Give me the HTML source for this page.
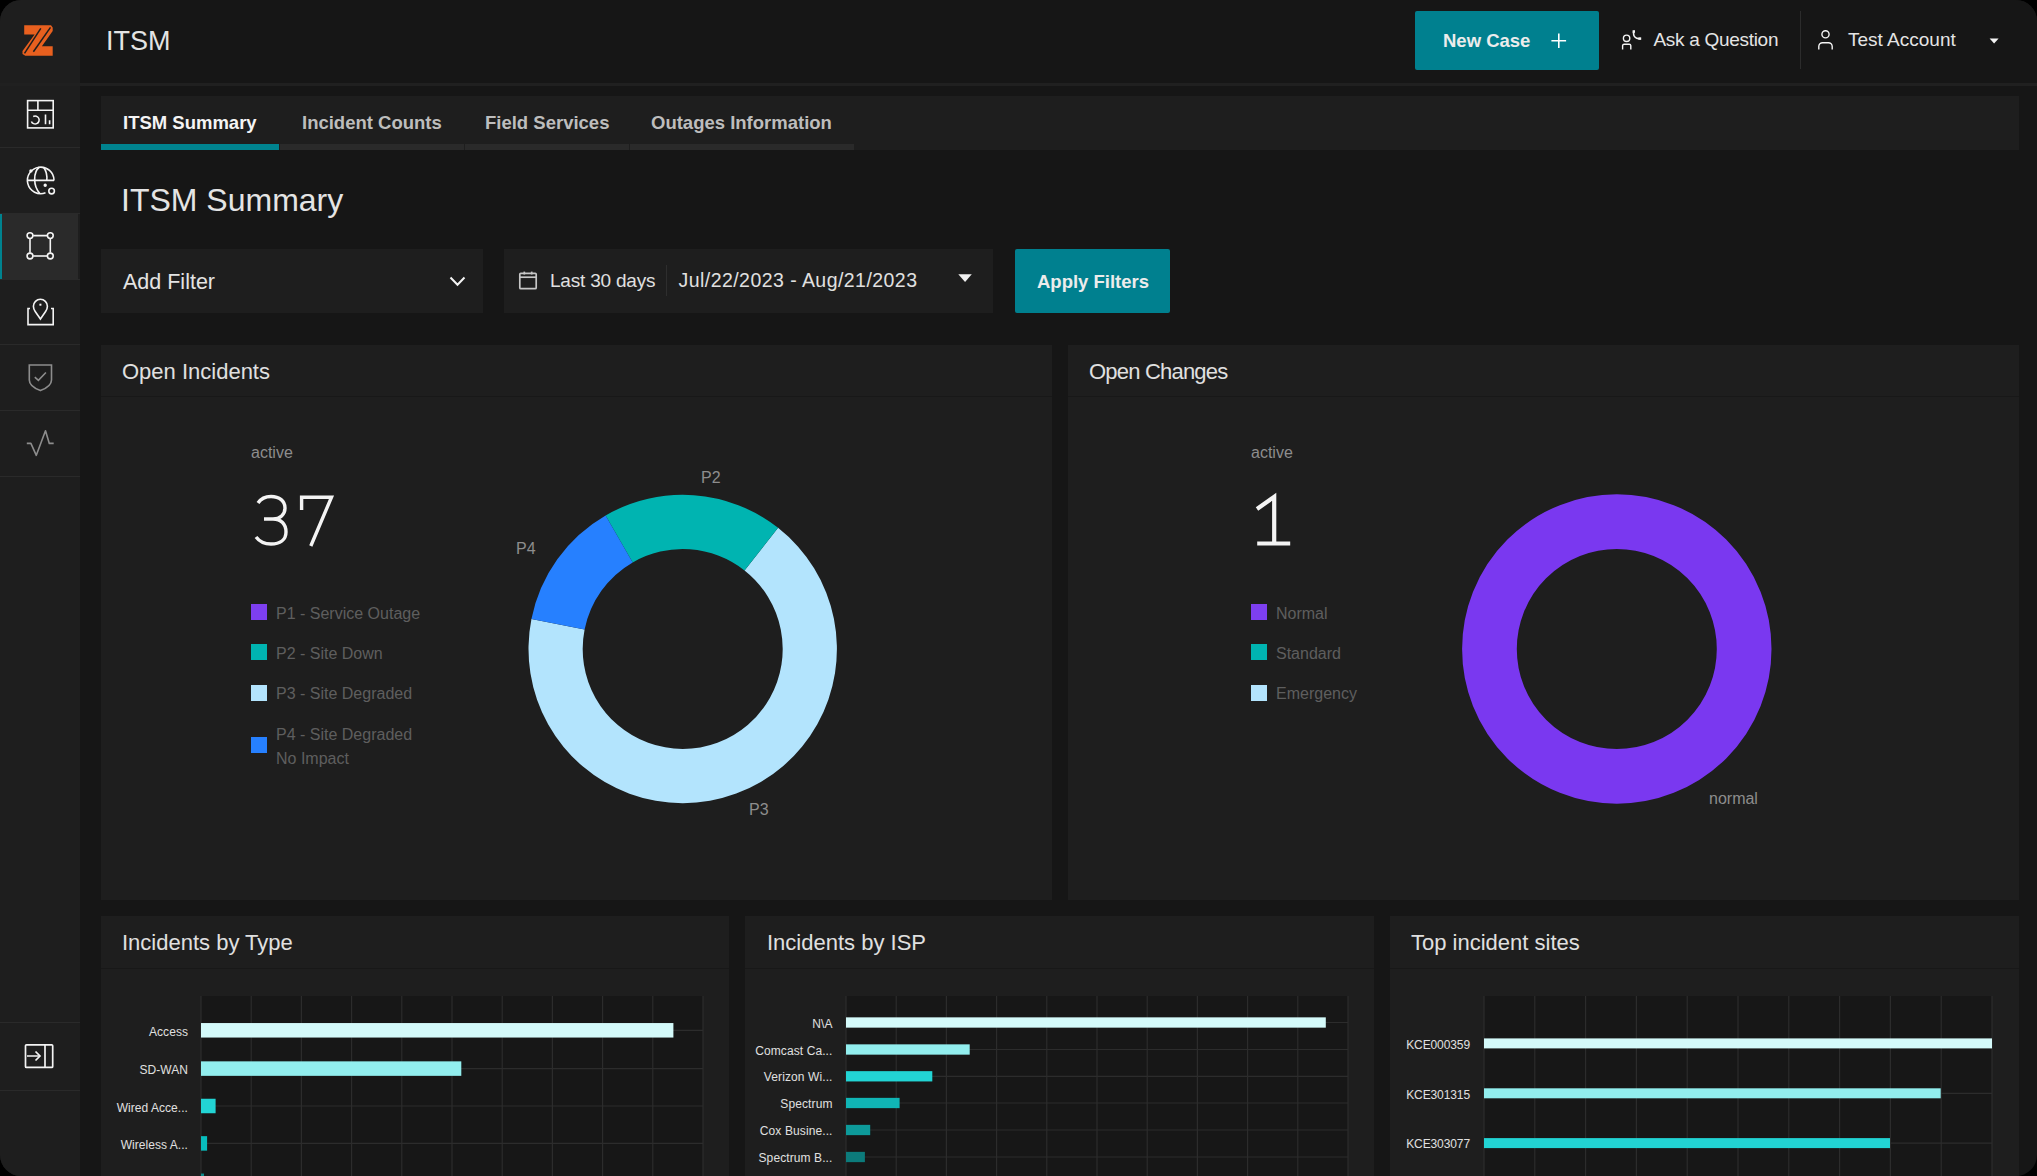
<!DOCTYPE html>
<html><head><meta charset="utf-8">
<style>
html,body{margin:0;padding:0;background:#000;width:2037px;height:1176px;overflow:hidden}
*{box-sizing:border-box}
#app{position:absolute;left:0;top:0;width:2037px;height:1176px;border-radius:21px;overflow:hidden;background:#161616;font-family:"Liberation Sans",sans-serif;color:#f4f4f4}
.a{position:absolute}
.t{position:absolute;white-space:nowrap;line-height:1}
#side{left:0;top:0;width:80px;height:1176px;background:#1e1e1e}
.hl{position:absolute;left:0;width:80px;height:1px;background:#2a2a2a}
#hdr{left:80px;top:0;width:1957px;height:83px;background:#161616}
#hdrline{left:0;top:83px;width:2037px;height:3px;background:#202020}
.card{position:absolute;background:#1e1e1e}
.card .sep{position:absolute;left:0;right:0;height:1px;background:#181818}
.ctitle{font-size:22px;color:#e0e0e0}
.leg{font-size:16px;color:#5e5e5e}
.dl{font-size:16px;color:#8d8d8d}
.plot{position:absolute;background:#171717}
</style></head>
<body>
<div id="app">
  <!-- sidebar -->
  <div id="side" class="a">
    <div class="hl" style="top:84px"></div>
    <div class="hl" style="top:147px"></div>
    <div class="a" style="left:0;top:213px;width:78px;height:66px;background:#2a2a2a"></div>
    <div class="a" style="left:0;top:213px;width:2px;height:66px;background:#00838f"></div>
    <div class="hl" style="top:213px"></div>
    <div class="hl" style="top:279px"></div>
    <div class="hl" style="top:344px"></div>
    <div class="hl" style="top:410px"></div>
    <div class="hl" style="top:476px"></div>
    <div class="hl" style="top:1022px"></div>
    <div class="hl" style="top:1090px"></div>
    <svg class="a" style="left:0;top:0" width="80" height="1176" viewBox="0 0 80 1176">
      <!-- logo -->
      <g>
        <polygon fill="#e8601f" points="24.2,25.3 51,25.3 52.7,27.5 52.7,31 41.9,46.3 52.7,46.3 52.7,55.7 25.3,55.7 22.5,54 22.5,51 34.6,34.5 24.2,34.5"/>
        <line x1="40.8" y1="28.3" x2="24.5" y2="53.4" stroke="#1e1e1e" stroke-width="1.5"/>
        <line x1="50.5" y1="27.4" x2="33.4" y2="51.7" stroke="#1e1e1e" stroke-width="1.5"/>
      </g>
      <g fill="none" stroke="#f4f4f4" stroke-width="1.6">
        <!-- dashboard -->
        <rect x="27.6" y="100.6" width="25.6" height="27.3"/>
        <line x1="27.6" y1="110.3" x2="53.2" y2="110.3"/>
        <line x1="37.9" y1="100.6" x2="37.9" y2="110.3"/>
        <path d="M33.2,116.5 A4,4 0 1 1 31.4,121.4" stroke-width="1.5"/>
        <line x1="45.5" y1="114.4" x2="45.5" y2="124.3"/>
        <line x1="49.6" y1="120.2" x2="49.6" y2="124.3"/>
        <!-- globe -->
        <path d="M54,180.4 A13.3,13.3 0 1 0 45.5,192.8"/>
        <line x1="27" y1="180.4" x2="54" y2="180.4"/>
        <path d="M39.5,167 C33,172 33,186 39.8,193.5"/>
        <path d="M43.5,167.2 C46.5,171 47.2,176 46.8,180.4"/>
        <circle cx="51.6" cy="191.1" r="2.8"/>
        <circle cx="30.9" cy="170.9" r="0.9" fill="#f4f4f4"/>
        <circle cx="45.2" cy="185.2" r="0.9" fill="#f4f4f4"/>
        <!-- square -->
        <line x1="30" y1="238.8" x2="30" y2="252.8"/>
        <line x1="50.3" y1="238.8" x2="50.3" y2="252.8"/>
        <line x1="33.2" y1="235.6" x2="47.1" y2="235.6"/>
        <line x1="33.2" y1="256" x2="47.1" y2="256"/>
        <circle cx="30" cy="235.6" r="2.9"/>
        <circle cx="50.3" cy="235.6" r="2.9"/>
        <circle cx="30" cy="256" r="2.9"/>
        <circle cx="50.3" cy="256" r="2.9"/>
        <!-- map pin -->
        <path d="M40.4,319 L35.2,311.5 C33.8,309.5 33.4,308 33.4,306.3 A7,7 0 0 1 47.4,306.3 C47.4,308 47,309.5 45.6,311.5 Z"/>
        <path d="M30,308.5 L28,308.5 L28,324.6 L53.2,324.6 L53.2,308.5 L51,308.5"/>
      </g>
      <rect x="39.4" y="303.7" width="2" height="2" fill="#f4f4f4"/>
      <g fill="none" stroke="#8d8d8d" stroke-width="1.6">
        <path d="M29.3,365 L51.5,365 L51.5,380 C51.5,385 46,388.5 40.4,390.6 C34.8,388.5 29.3,385 29.3,380 Z"/>
        <path d="M34.8,377.1 L38.4,380.3 L45.9,372.5"/>
        <path d="M26.8,443.4 L30.9,443.4 L36.3,455.3 L45.5,430.8 L49.3,443.4 L53.7,443.4" stroke-linejoin="round"/>
      </g>
      <g fill="none" stroke="#f4f4f4" stroke-width="1.7">
        <rect x="25.5" y="1044.8" width="27.2" height="22.6" rx="1"/>
        <line x1="45" y1="1044.8" x2="45" y2="1067.4"/>
        <line x1="27" y1="1056" x2="40" y2="1056"/>
        <path d="M35.5,1051.5 L40,1056 L35.5,1060.5"/>
      </g>
    </svg>
  </div>
  <!-- header -->
  <div id="hdr" class="a">
    <div class="t" style="left:26px;top:28px;font-size:27px;color:#e4e4e4">ITSM</div>
  </div>
  <div class="a" style="left:1415px;top:11px;width:184px;height:59px;background:#00808f;border-radius:2px"></div>
  <div class="t" style="left:1443px;top:31.5px;font-size:18.5px;font-weight:bold;color:#ececec">New Case</div>
  <svg class="a" style="left:1549px;top:31px" width="20" height="20" viewBox="0 0 20 20"><path d="M9.8,2.4 V17.1 M2.4,9.8 H17.1" stroke="#fff" stroke-width="1.6"/></svg>
  <svg class="a" style="left:1615px;top:25px" width="30" height="30" viewBox="1615 25 30 30" fill="none" stroke="#f4f4f4" stroke-width="1.4">
    <circle cx="1626.6" cy="38.3" r="3.2"/>
    <path d="M1622.6,49.5 V45.5 A1.5,1.5 0 0 1 1624.1,44.2 H1629.3 A1.5,1.5 0 0 1 1630.8,45.5 V49.5"/>
    <path d="M1633.6,31.5 L1633.6,34 C1633.6,36.5 1636,38.6 1638.5,38.6 L1640.8,38.6" stroke-width="1.6"/>
    <rect x="1632.6" y="30.2" width="2.4" height="2.6" fill="#f4f4f4" stroke="none"/>
    <rect x="1638.4" y="37.4" width="2.8" height="2.4" fill="#f4f4f4" stroke="none"/>
  </svg>
  <div class="t" style="left:1653.5px;top:30px;font-size:19px;letter-spacing:-0.3px;color:#e4e4e4">Ask a Question</div>
  <div class="a" style="left:1800px;top:11px;width:1px;height:58px;background:#2c2c2c"></div>
  <svg class="a" style="left:1812px;top:25px" width="30" height="30" viewBox="1812 25 30 30" fill="none" stroke="#f4f4f4" stroke-width="1.4">
    <circle cx="1825.5" cy="34.3" r="3.6"/>
    <path d="M1818.8,49.5 V46.5 A3.8,3.8 0 0 1 1822.6,42.7 H1828.4 A3.8,3.8 0 0 1 1832.2,46.5 V49.5"/>
  </svg>
  <div class="t" style="left:1848px;top:30px;font-size:19px;color:#e4e4e4">Test Account</div>
  <svg class="a" style="left:1985px;top:34px" width="18" height="14" viewBox="1985 34 18 14"><path d="M1989.6,38.4 H1998.6 L1994.1,43.6 Z" fill="#f4f4f4"/></svg>
  <div id="hdrline" class="a"></div>

  <!-- tabs -->
  <div class="a" style="left:101px;top:96px;width:1918px;height:54px;background:#1e1e1e"></div>
  <div class="a" style="left:101px;top:144px;width:178px;height:5.6px;background:#00838f"></div>
  <div class="a" style="left:280px;top:144px;width:184px;height:5.6px;background:#2a2a2a"></div>
  <div class="a" style="left:465px;top:144px;width:164px;height:5.6px;background:#2a2a2a"></div>
  <div class="a" style="left:630px;top:144px;width:224px;height:5.6px;background:#2a2a2a"></div>
  <div class="t" style="left:123px;top:114px;font-size:18.5px;font-weight:bold;color:#f4f4f4">ITSM Summary</div>
  <div class="t" style="left:302px;top:114px;font-size:18.5px;font-weight:bold;color:#bdbdbd">Incident Counts</div>
  <div class="t" style="left:485px;top:114px;font-size:18.5px;font-weight:bold;color:#bdbdbd">Field Services</div>
  <div class="t" style="left:651px;top:114px;font-size:18.5px;font-weight:bold;color:#bdbdbd">Outages Information</div>
  <div class="t" style="left:121px;top:184px;font-size:32px;color:#e4e4e4">ITSM Summary</div>

  <!-- filters -->
  <div class="a" style="left:101px;top:249px;width:382px;height:64px;background:#1e1e1e"></div>
  <div class="t" style="left:123px;top:272px;font-size:21.5px;color:#e4e4e4">Add Filter</div>
  <svg class="a" style="left:445px;top:270px" width="25" height="22" viewBox="445 270 25 22"><path d="M450.5,277.5 L457.5,284.8 L464.5,277.5" fill="none" stroke="#f4f4f4" stroke-width="2"/></svg>
  <div class="a" style="left:504px;top:249px;width:489px;height:64px;background:#1e1e1e"></div>
  <svg class="a" style="left:515px;top:266px" width="26" height="26" viewBox="515 266 26 26" fill="none" stroke="#c6c6c6" stroke-width="1.7">
    <rect x="519.8" y="273.3" width="16.4" height="15.4" rx="1"/>
    <line x1="519.8" y1="277.2" x2="536.2" y2="277.2"/>
    <line x1="524.3" y1="271.6" x2="524.3" y2="274.5"/>
    <line x1="531.7" y1="271.6" x2="531.7" y2="274.5"/>
  </svg>
  <div class="t" style="left:550px;top:271px;font-size:19px;letter-spacing:-0.2px;color:#e0e0e0">Last 30 days</div>
  <div class="a" style="left:666px;top:265px;width:1px;height:31px;background:#2e2e2e"></div>
  <div class="t" style="left:678.5px;top:271px;font-size:19.5px;letter-spacing:0.45px;color:#e0e0e0">Jul/22/2023 - Aug/21/2023</div>
  <svg class="a" style="left:950px;top:268px" width="30" height="20" viewBox="950 268 30 20"><path d="M958.3,274.2 H971.8 L965.05,282 Z" fill="#f0f0f0"/></svg>
  <div class="a" style="left:1015px;top:249px;width:155px;height:64px;background:#00808f;border-radius:2px"></div>
  <div class="t" style="left:1037px;top:273px;font-size:18.5px;font-weight:bold;color:#ececec">Apply Filters</div>

  <!-- cards row 1 -->
  <div class="card" style="left:101px;top:345px;width:950.5px;height:555px">
    <div class="sep" style="top:51px"></div>
  </div>
  <div class="t ctitle" style="left:122px;top:361px">Open Incidents</div>
  <div class="t" style="left:251px;top:445px;font-size:16px;color:#8d8d8d">active</div>
  <svg class="a" style="left:240px;top:480px" width="110" height="80" viewBox="240 480 110 80" fill="none" stroke="#f4f4f4" stroke-width="3.4">
    <path d="M258,503 C261,498.5 265.5,496.5 271,496.5 C279.5,496.5 285,501 285,508 C285,514.5 280,519 273,519 L264,519 M273,519 C281,519 286,524 286,532 C286,540 280,544 271,544 C264,544 259,541 256,537"/>
    <path d="M301.6,510 L301.6,497.2 L331.5,497.2 L310.8,546" stroke-linejoin="miter"/>
  </svg>
  <div class="a" style="left:251px;top:604px;width:16px;height:16px;background:#7d3ff0"></div>
  <div class="a" style="left:251px;top:644px;width:16px;height:16px;background:#00b4b1"></div>
  <div class="a" style="left:251px;top:685px;width:16px;height:16px;background:#b3e4fd"></div>
  <div class="a" style="left:251px;top:737px;width:16px;height:16px;background:#2680ff"></div>
  <div class="t leg" style="left:276px;top:605.5px">P1 - Service Outage</div>
  <div class="t leg" style="left:276px;top:645.5px">P2 - Site Down</div>
  <div class="t leg" style="left:276px;top:686px">P3 - Site Degraded</div>
  <div class="t leg" style="left:276px;top:723px;line-height:23.7px">P4 - Site Degraded<br>No Impact</div>
  <svg class="a" style="left:500px;top:450px" width="370" height="380" viewBox="500 450 370 380">
    <path d="M778.06,527.82 A154.2,154.2 0 1 1 531.44,619.05 L584.60,629.58 A100,100 0 1 0 744.54,570.41 Z" fill="#b3e4fd"/>
    <path d="M605.60,515.46 A154.2,154.2 0 0 1 778.06,527.82 L744.54,570.41 A100,100 0 0 0 632.70,562.40 Z" fill="#00b4b1"/>
    <path d="M531.44,619.05 A154.2,154.2 0 0 1 605.60,515.46 L632.70,562.40 A100,100 0 0 0 584.60,629.58 Z" fill="#2680ff"/>
  </svg>
  <div class="t dl" style="left:701px;top:470px">P2</div>
  <div class="t dl" style="left:516px;top:541px">P4</div>
  <div class="t dl" style="left:749px;top:802px">P3</div>
  <div class="card" style="left:1068px;top:345px;width:951px;height:555px">
    <div class="sep" style="top:51px"></div>
  </div>
  <div class="t ctitle" style="left:1089px;top:361px;letter-spacing:-0.8px">Open Changes</div>
  <div class="t" style="left:1251px;top:445px;font-size:16px;color:#8d8d8d">active</div>
  <svg class="a" style="left:1245px;top:480px" width="60" height="80" viewBox="1245 480 60 80" fill="none" stroke="#f4f4f4" stroke-width="4.2">
    <path d="M1257,509 L1274.2,496.8 L1274.2,543.5 M1257.2,543.5 L1290.2,543.5"/>
  </svg>
  <div class="a" style="left:1251px;top:604px;width:16px;height:16px;background:#7d3ff0"></div>
  <div class="a" style="left:1251px;top:644px;width:16px;height:16px;background:#00b4b1"></div>
  <div class="a" style="left:1251px;top:685px;width:16px;height:16px;background:#b3e4fd"></div>
  <div class="t leg" style="left:1276px;top:605.5px">Normal</div>
  <div class="t leg" style="left:1276px;top:645.5px">Standard</div>
  <div class="t leg" style="left:1276px;top:686px">Emergency</div>
  <svg class="a" style="left:1440px;top:470px" width="360" height="360" viewBox="1440 470 360 360">
    <circle cx="1616.8" cy="649" r="127.35" fill="none" stroke="#7a38f0" stroke-width="54.7"/>
  </svg>
  <div class="t dl" style="left:1709px;top:790.5px">normal</div>
  <!-- cards row 2 -->
  <div class="card" style="left:101px;top:916px;width:628px;height:300px">
    <div class="sep" style="top:52px"></div>
  </div>
  <div class="t ctitle" style="left:122px;top:932px">Incidents by Type</div>
  <div class="plot" style="left:201px;top:996px;width:502px;height:180px"></div>
  <svg class="a" style="left:199px;top:996px" width="506" height="180" viewBox="199 996 506 180">
  <line x1="201.00" y1="996" x2="201.00" y2="1176" stroke="#2c2c2c" stroke-width="1.2"/>
  <line x1="251.20" y1="996" x2="251.20" y2="1176" stroke="#2c2c2c" stroke-width="1.2"/>
  <line x1="301.40" y1="996" x2="301.40" y2="1176" stroke="#2c2c2c" stroke-width="1.2"/>
  <line x1="351.60" y1="996" x2="351.60" y2="1176" stroke="#2c2c2c" stroke-width="1.2"/>
  <line x1="401.80" y1="996" x2="401.80" y2="1176" stroke="#2c2c2c" stroke-width="1.2"/>
  <line x1="452.00" y1="996" x2="452.00" y2="1176" stroke="#2c2c2c" stroke-width="1.2"/>
  <line x1="502.20" y1="996" x2="502.20" y2="1176" stroke="#2c2c2c" stroke-width="1.2"/>
  <line x1="552.40" y1="996" x2="552.40" y2="1176" stroke="#2c2c2c" stroke-width="1.2"/>
  <line x1="602.60" y1="996" x2="602.60" y2="1176" stroke="#2c2c2c" stroke-width="1.2"/>
  <line x1="652.80" y1="996" x2="652.80" y2="1176" stroke="#2c2c2c" stroke-width="1.2"/>
  <line x1="703.00" y1="996" x2="703.00" y2="1176" stroke="#2c2c2c" stroke-width="1.2"/>
  <line x1="201" y1="1030.30" x2="703" y2="1030.30" stroke="#2c2c2c" stroke-width="1.2"/>
  <line x1="201" y1="1068.60" x2="703" y2="1068.60" stroke="#2c2c2c" stroke-width="1.2"/>
  <line x1="201" y1="1106.00" x2="703" y2="1106.00" stroke="#2c2c2c" stroke-width="1.2"/>
  <line x1="201" y1="1143.40" x2="703" y2="1143.40" stroke="#2c2c2c" stroke-width="1.2"/>
  <line x1="201" y1="1180.80" x2="703" y2="1180.80" stroke="#2c2c2c" stroke-width="1.2"/>
  <rect x="201" y="1023.05" width="472.40" height="14.5" fill="#d4fafa"/>
  <rect x="201" y="1061.35" width="260.30" height="14.5" fill="#92eeee"/>
  <rect x="201" y="1098.75" width="14.60" height="14.5" fill="#22d4d4"/>
  <rect x="201" y="1136.15" width="6.10" height="14.5" fill="#08bdbd"/>
  <rect x="201" y="1173.55" width="3.00" height="14.5" fill="#0d8a8a"/>
  </svg>
  <div class="t" style="right:1849px;top:1026.05px;font-size:12px;letter-spacing:0.05px;color:#e0e0e0;text-align:right">Access</div>
  <div class="t" style="right:1849px;top:1064.35px;font-size:12px;letter-spacing:0.05px;color:#e0e0e0;text-align:right">SD-WAN</div>
  <div class="t" style="right:1849px;top:1101.75px;font-size:12px;letter-spacing:0.05px;color:#e0e0e0;text-align:right">Wired Acce...</div>
  <div class="t" style="right:1849px;top:1139.15px;font-size:12px;letter-spacing:0.05px;color:#e0e0e0;text-align:right">Wireless A...</div>
  <div class="card" style="left:745px;top:916px;width:629px;height:300px">
    <div class="sep" style="top:52px"></div>
  </div>
  <div class="t ctitle" style="left:767px;top:932px">Incidents by ISP</div>
  <div class="plot" style="left:846px;top:996px;width:502px;height:180px"></div>
  <svg class="a" style="left:844px;top:996px" width="506" height="180" viewBox="844 996 506 180">
  <line x1="846.00" y1="996" x2="846.00" y2="1176" stroke="#2c2c2c" stroke-width="1.2"/>
  <line x1="896.20" y1="996" x2="896.20" y2="1176" stroke="#2c2c2c" stroke-width="1.2"/>
  <line x1="946.40" y1="996" x2="946.40" y2="1176" stroke="#2c2c2c" stroke-width="1.2"/>
  <line x1="996.60" y1="996" x2="996.60" y2="1176" stroke="#2c2c2c" stroke-width="1.2"/>
  <line x1="1046.80" y1="996" x2="1046.80" y2="1176" stroke="#2c2c2c" stroke-width="1.2"/>
  <line x1="1097.00" y1="996" x2="1097.00" y2="1176" stroke="#2c2c2c" stroke-width="1.2"/>
  <line x1="1147.20" y1="996" x2="1147.20" y2="1176" stroke="#2c2c2c" stroke-width="1.2"/>
  <line x1="1197.40" y1="996" x2="1197.40" y2="1176" stroke="#2c2c2c" stroke-width="1.2"/>
  <line x1="1247.60" y1="996" x2="1247.60" y2="1176" stroke="#2c2c2c" stroke-width="1.2"/>
  <line x1="1297.80" y1="996" x2="1297.80" y2="1176" stroke="#2c2c2c" stroke-width="1.2"/>
  <line x1="1348.00" y1="996" x2="1348.00" y2="1176" stroke="#2c2c2c" stroke-width="1.2"/>
  <line x1="846" y1="1022.50" x2="1348" y2="1022.50" stroke="#2c2c2c" stroke-width="1.2"/>
  <line x1="846" y1="1049.50" x2="1348" y2="1049.50" stroke="#2c2c2c" stroke-width="1.2"/>
  <line x1="846" y1="1076.30" x2="1348" y2="1076.30" stroke="#2c2c2c" stroke-width="1.2"/>
  <line x1="846" y1="1103.00" x2="1348" y2="1103.00" stroke="#2c2c2c" stroke-width="1.2"/>
  <line x1="846" y1="1130.00" x2="1348" y2="1130.00" stroke="#2c2c2c" stroke-width="1.2"/>
  <line x1="846" y1="1157.00" x2="1348" y2="1157.00" stroke="#2c2c2c" stroke-width="1.2"/>
  <rect x="846" y="1017.35" width="479.80" height="10.3" fill="#d4fafa"/>
  <rect x="846" y="1044.35" width="123.70" height="10.3" fill="#92eeee"/>
  <rect x="846" y="1071.15" width="86.30" height="10.3" fill="#22d4d4"/>
  <rect x="846" y="1097.85" width="53.60" height="10.3" fill="#10b5b5"/>
  <rect x="846" y="1124.85" width="24.20" height="10.3" fill="#0d9a9a"/>
  <rect x="846" y="1151.85" width="18.90" height="10.3" fill="#0c7b7b"/>
  </svg>
  <div class="t" style="right:1204.5px;top:1017.59px;font-size:12px;letter-spacing:0.1px;color:#e0e0e0;text-align:right">N\A</div>
  <div class="t" style="right:1204.5px;top:1044.59px;font-size:12px;letter-spacing:0.1px;color:#e0e0e0;text-align:right">Comcast Ca...</div>
  <div class="t" style="right:1204.5px;top:1071.39px;font-size:12px;letter-spacing:0.1px;color:#e0e0e0;text-align:right">Verizon Wi...</div>
  <div class="t" style="right:1204.5px;top:1098.09px;font-size:12px;letter-spacing:0.1px;color:#e0e0e0;text-align:right">Spectrum</div>
  <div class="t" style="right:1204.5px;top:1125.09px;font-size:12px;letter-spacing:0.1px;color:#e0e0e0;text-align:right">Cox Busine...</div>
  <div class="t" style="right:1204.5px;top:1152.09px;font-size:12px;letter-spacing:0.1px;color:#e0e0e0;text-align:right">Spectrum B...</div>
  <div class="card" style="left:1390px;top:916px;width:629px;height:300px">
    <div class="sep" style="top:52px"></div>
  </div>
  <div class="t ctitle" style="left:1411px;top:932px">Top incident sites</div>
  <div class="plot" style="left:1484px;top:996px;width:508px;height:180px"></div>
  <svg class="a" style="left:1482px;top:996px" width="512" height="180" viewBox="1482 996 512 180">
  <line x1="1484.00" y1="996" x2="1484.00" y2="1176" stroke="#2c2c2c" stroke-width="1.2"/>
  <line x1="1534.80" y1="996" x2="1534.80" y2="1176" stroke="#2c2c2c" stroke-width="1.2"/>
  <line x1="1585.60" y1="996" x2="1585.60" y2="1176" stroke="#2c2c2c" stroke-width="1.2"/>
  <line x1="1636.40" y1="996" x2="1636.40" y2="1176" stroke="#2c2c2c" stroke-width="1.2"/>
  <line x1="1687.20" y1="996" x2="1687.20" y2="1176" stroke="#2c2c2c" stroke-width="1.2"/>
  <line x1="1738.00" y1="996" x2="1738.00" y2="1176" stroke="#2c2c2c" stroke-width="1.2"/>
  <line x1="1788.80" y1="996" x2="1788.80" y2="1176" stroke="#2c2c2c" stroke-width="1.2"/>
  <line x1="1839.60" y1="996" x2="1839.60" y2="1176" stroke="#2c2c2c" stroke-width="1.2"/>
  <line x1="1890.40" y1="996" x2="1890.40" y2="1176" stroke="#2c2c2c" stroke-width="1.2"/>
  <line x1="1941.20" y1="996" x2="1941.20" y2="1176" stroke="#2c2c2c" stroke-width="1.2"/>
  <line x1="1992.00" y1="996" x2="1992.00" y2="1176" stroke="#2c2c2c" stroke-width="1.2"/>
  <line x1="1484" y1="1043.40" x2="1992" y2="1043.40" stroke="#2c2c2c" stroke-width="1.2"/>
  <line x1="1484" y1="1093.30" x2="1992" y2="1093.30" stroke="#2c2c2c" stroke-width="1.2"/>
  <line x1="1484" y1="1143.10" x2="1992" y2="1143.10" stroke="#2c2c2c" stroke-width="1.2"/>
  <rect x="1484" y="1038.40" width="508.00" height="10" fill="#d4fafa"/>
  <rect x="1484" y="1088.30" width="456.70" height="10" fill="#92eeee"/>
  <rect x="1484" y="1138.10" width="406.00" height="10" fill="#22d4d4"/>
  </svg>
  <div class="t" style="right:567px;top:1038.79px;font-size:12px;letter-spacing:-0.1px;color:#e0e0e0;text-align:right">KCE000359</div>
  <div class="t" style="right:567px;top:1088.69px;font-size:12px;letter-spacing:-0.1px;color:#e0e0e0;text-align:right">KCE301315</div>
  <div class="t" style="right:567px;top:1138.49px;font-size:12px;letter-spacing:-0.1px;color:#e0e0e0;text-align:right">KCE303077</div>
</div>
</body></html>
